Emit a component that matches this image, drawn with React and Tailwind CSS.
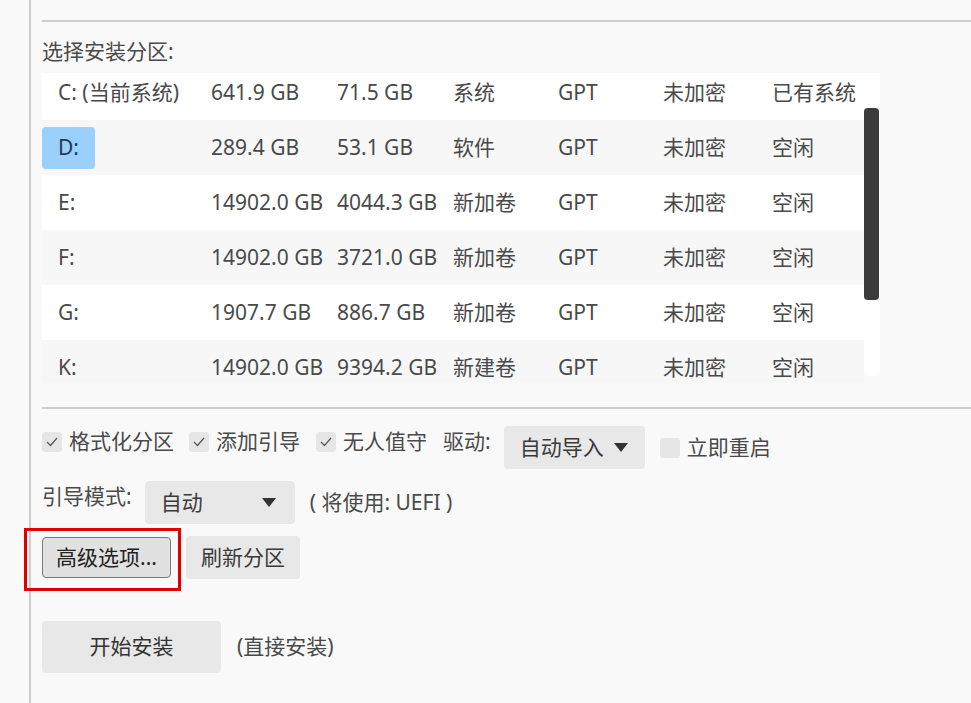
const rows = [
  ['C: (当前系统)', '641.9 GB', '71.5 GB', '系统', 'GPT', '未加密', '已有系统'],
  ['D:', '289.4 GB', '53.1 GB', '软件', 'GPT', '未加密', '空闲'],
  ['E:', '14902.0 GB', '4044.3 GB', '新加卷', 'GPT', '未加密', '空闲'],
  ['F:', '14902.0 GB', '3721.0 GB', '新加卷', 'GPT', '未加密', '空闲'],
  ['G:', '1907.7 GB', '886.7 GB', '新加卷', 'GPT', '未加密', '空闲'],
  ['K:', '14902.0 GB', '9394.2 GB', '新建卷', 'GPT', '未加密', '空闲'],
];

function Check({ checked }) {
  return (
    <span className="flex h-5 w-5 shrink-0 items-center justify-center rounded-[3px] bg-[#e6e6e6]">
      {checked && (
        <svg width="12" height="10" viewBox="0 0 12 10" fill="none">
          <path d="M1 5 L4.5 8.5 L11 1" stroke="#555" strokeWidth="1.2" />
        </svg>
      )}
    </span>
  );
}

function CheckItem({ label, checked = true, className = '' }) {
  return (
    <label className={`flex items-center gap-[7px] ${className}`}>
      <Check checked={checked} />
      <span>{label}</span>
    </label>
  );
}

function Arrow() {
  return (
    <svg width="14" height="9" viewBox="0 0 14 9">
      <path d="M0 0 H14 L7 9 Z" fill="#333" />
    </svg>
  );
}

function Dropdown({ value, className = '' }) {
  return (
    <div className={`flex h-[43px] items-center justify-between rounded-[4px] bg-[#e8e8e8] pl-4 pr-[17px] text-[#3a3a3a] ${className}`}>
      <span>{value}</span>
      <Arrow />
    </div>
  );
}

function PartitionTable() {
  return (
    <div className="flex h-[303px] w-[838px] items-start">
      <div className="h-[310px] w-[822px] overflow-hidden">
        <div className="-mt-2">
          {rows.map((r, i) => (
            <div
              key={r[0]}
              className={`grid h-[55px] grid-cols-[169px_126px_116px_105px_105px_109px_1fr] items-center ${i % 2 ? 'bg-[#f7f7f7]' : 'bg-white'}`}
            >
              <div>
                <span className={`inline-flex h-[42px] items-center rounded-[4px] px-4 ${i === 1 ? 'bg-[#9ad0fb] text-[#1c3b57]' : ''}`}>
                  {r[0]}
                </span>
              </div>
              {r.slice(1).map((c, j) => (
                <div key={j} className="whitespace-nowrap">{c}</div>
              ))}
            </div>
          ))}
        </div>
      </div>
      <div className="h-[303px] w-4 rounded-b-[4px] bg-white pt-[35px]">
        <div className="h-[192px] w-[15px] rounded-[4px] bg-[#3b3b3b]" />
      </div>
    </div>
  );
}

export default function App() {
  return (
    <div className="flex h-[703px] w-[971px] overflow-hidden bg-[#f9f9f9] text-[21px] leading-[1.4] text-[#4a4a4a] [font-family:'Noto_Sans','Noto_Sans_CJK_SC',sans-serif]">
      <div className="w-[29px] shrink-0" />
      <div className="w-[2px] shrink-0 bg-[#cdcdcd]" />
      <div className="relative flex-1 pl-[11px] pt-5">
        <div className="h-[2px] bg-[#cdcdcd]" />
        <div className="mt-[15px] h-[36px]">选择安装分区:</div>
        <PartitionTable />
        <div className="mt-[31px] h-[2px] bg-[#cdcdcd]" />

        <div className="mt-[17px] flex items-start">
          <CheckItem label="格式化分区" className="mt-[1px]" />
          <CheckItem label="添加引导" className="ml-[15px] mt-[1px]" />
          <CheckItem label="无人值守" className="ml-4 mt-[1px]" />
          <span className="ml-4 mt-[1px]">驱动:</span>
          <Dropdown value="自动导入" className="ml-[13px] w-[141px]" />
          <CheckItem label="立即重启" checked={false} className="ml-[15px] h-[43px]" />
        </div>

        <div className="mt-3 flex items-start">
          <span className="mt-[1px]">引导模式:</span>
          <Dropdown value="自动" className="ml-[13px] w-[150px] !pr-[19px]" />
          <span className="ml-[15px] flex h-[43px] items-center">( 将使用: UEFI )</span>
        </div>

        <div className="mt-3 flex items-center gap-[15px]">
          <button className="flex h-[41px] w-[129px] items-center justify-center rounded-[4px] border border-[#7a7a7a] bg-[#e1e1e1] text-[#222]">
            高级选项...
          </button>
          <button className="flex h-[43px] w-[114px] items-center justify-center rounded-[4px] bg-[#e8e8e8] text-[#3a3a3a]">
            刷新分区
          </button>
        </div>

        <div className="mt-[42px] flex items-center gap-4">
          <button className="flex h-[52px] w-[179px] items-center justify-center rounded-[4px] bg-[#e8e8e8] text-[#333]">
            开始安装
          </button>
          <span>(直接安装)</span>
        </div>

        <div className="pointer-events-none absolute left-[-7px] top-[528px] h-[63px] w-[157px] border-[3px] border-[#e10000]" />
      </div>
    </div>
  );
}
